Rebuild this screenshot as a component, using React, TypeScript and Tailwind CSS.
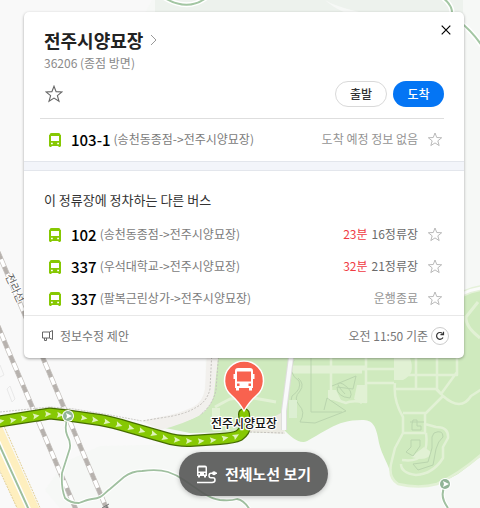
import React from 'react';

type Route = { no: string; path: string; minutes?: string; stops?: string; status?: string };

const routes: Route[] = [
  { no: '102', path: '(송천동종점->전주시양묘장)', minutes: '23', stops: '16정류장' },
  { no: '337', path: '(우석대학교->전주시양묘장)', minutes: '32', stops: '21정류장' },
  { no: '337', path: '(팔복근린상가->전주시양묘장)', status: '운행종료' },
];

function StarIcon({ className }: { className: string }) {
  return (
    <svg viewBox="0 0 18 18" className={className} fill="none" stroke="currentColor" strokeWidth="1.1" aria-hidden="true">
      <path d="M9 1.2 11.1 6.6 17 6.9 12.4 10.6 14 16.3 9 13.1 4 16.3 5.6 10.6 1 6.9 6.9 6.6Z" />
    </svg>
  );
}

function BusIcon({ className }: { className: string }) {
  return (
    <svg viewBox="0 0 12 14" className={className} aria-hidden="true">
      <path
        fill="currentColor"
        fillRule="evenodd"
        d="M2.5 0H9.5Q11.5 0 11.5 2H12V13H11.5V14H9.5V13H2.5V14H.5V13H0V2H.5Q.5 0 2.5 0ZM2 3V8H10V3ZM2 9.8V11.2H3.8V9.8ZM8.2 9.8V11.2H10V9.8Z"
      />
    </svg>
  );
}

function RouteRow({ route }: { route: Route }) {
  return (
    <li className="flex h-8 items-center pl-[25px] pr-[21px]">
      <BusIcon className="mt-0.5 h-3.5 w-3 shrink-0 text-[#86c803]" />
      <strong className="ml-2.5 mt-0.5 text-[15px] font-medium leading-5 text-black">{route.no}</strong>
      <span className="ml-[3px] whitespace-nowrap text-xs text-[#7b7b7b]">{route.path}</span>
      <span className="ml-auto whitespace-nowrap text-xs text-[#6b6b6b]">
        {route.minutes && <span className="mr-1 text-[#f03b44]">{route.minutes}분</span>}
        {route.stops ?? <span className="text-[#949494]">{route.status}</span>}
      </span>
      <button type="button" aria-label={`${route.no} 즐겨찾기`} className="ml-[9px] text-[#b2b2b2]">
        <StarIcon className="h-[15px] w-4" />
      </button>
    </li>
  );
}

const busLine = 'M-4 422 50 413.500 68 415.500 100 420Q112 422 130 427.500L165 437.500Q178 441.500 190 441L220 439Q234 438 239 435.500 245 431 245 426L244 414';
const trail = 'M68 416Q64 427 67 435 72 444 69 451L62 473Q61 488 65 498 70 503 79 503C88 500 83 501 92 499 103 498 103 494 110 489L124 477Q132 471 142 471 158 469 168 472 177 475 184 480L203 493Q212 499 220 500 231 501 237 499 244 500 250 510';

const arrows: [number, number, number][] = [
  [1, 421, -8], [13, 420, -8], [24, 418, -8], [36, 416, -8], [48, 414, 0], [60, 415, 6], [84, 418, 7], [95, 420, 8],
  [107, 422, 12], [119, 425, 15], [131, 428, 15], [142, 431, 15], [154, 434, 16], [165, 438, 15], [177, 440, 5],
  [189, 441, 0], [201, 441, -4], [213, 440, -6], [225, 438, -12], [236, 436, -30],
];

function MapCanvas() {
  return (
    <svg className="absolute inset-0 h-full w-full" aria-hidden="true">
      <rect width="100%" height="100%" fill="#f6f8f6" />
      <path d="M0 0H152L100 100 180 358H205Q208 400 195 407L160 432 190 444 100 446 65 462 45 490 60 508H0Z" fill="#f9f9f9" />
      <path d="M155 0H463V20H400Q340 10 325 0 340 14 370 20H155Z" fill="#edf2ed" />
      <g fill="none" strokeLinecap="round">
        <path d="M163-3Q187 12 206-2M443-2Q454 6 452 18M460 22Q472 31 482 46" stroke="#fff" strokeWidth="5" />
        <path d="M163-3Q187 12 206-2M443-2Q454 6 452 18M460 22Q472 31 482 46" stroke="#a3c6a3" strokeWidth="2" />
      </g>

      <path d="M206 340H480V457Q466 468 458 474 437 487 413 487 397 485 392 478C388 462 382 456 379 443 376 424 372 420 362 420 348 420 339 423 330 428 315 436 306 443 303 442 297 442 290 436 283 429L280 433 245 432 190 433 160 427Q195 421 205 411 214 399 214 358Z" fill="#cfeabe" />
      <path d="M462 345V293L480 288V345Z" fill="#cfeabe" />
      <path d="M462 294Q472 289 482 288" fill="none" stroke="#e5f1da" strokeWidth="6" />
      <path d="M462 294Q472 289 482 288" fill="none" stroke="#fafbfa" strokeWidth="3" />

      <g fill="none" stroke="#e2f1d5" strokeWidth="2.500" strokeLinejoin="round">
        <path d="M478 302 466 317Q465 326 480 338M215 407Q224 402 230 399L248 397 276 402" strokeWidth="3" />
        <path d="M292 368H365M292 371H362" strokeWidth="5" />
        <path d="M331 358V398L346 403Q350 400 366 402V358M366 369H394M366 383H394M394 375H457V358M395 389H436L441 394 457 372M416 358V388M437 358V389L443 396 426 413H403M395 383Q393 400 403 417V433L395 448 392 460Q387 477 398 484 419 489 437 484 459 474 482 454M443 396Q461 412 471 396L482 389M403 433H425V413M425 424 436 427Q449 427 448 438L443 447V458Q433 474 416 475 401 473 401 464M402 460Q430 464 426 433" />
      </g>
      <path d="M394 358H410Q416 374 403 380H394ZM328 390H336L341 400H328ZM357 385H367V399L361 404 354 399ZM424 447 431 452Q430 459 421 459L411 457Z" fill="#e1f1d4" />
      <g fill="none" stroke="#bad5ae" strokeWidth="1">
        <path d="M298 378Q305 384 300 391 293 398 299 405 306 412 300 422L315 423 346 411 327 398 324 410M311 358V412H342M294 360Q287 373 299 381 302 389 292 396 288 408 297 416M332 386 356 376 353 389 337 387Q337 397 350 398 354 391 343 384 332 380 345 394M410 422H424M413 420H417V426H421V430H412V424ZM411 440H420V446L413 456 406 452 411 447ZM434 433Q443 429 443 437 438 441 436 449L433 465 418 470 413 464 428 462 432 448 432 437Z" />
      </g>
      <rect x="212" y="408" width="8" height="9" fill="#e2f1d5" />
      <rect x="289" y="400" width="8" height="18" fill="#dcefd2" />

      <path d="M207 350 205 389Q203 402 193 407 178 414 160 417L142 421 160 430Q184 424 200 415 213 405 214 394L219 350Z" fill="#f2f0ed" />
      <path d="M256 426 281 413 285 434 247 432Z" fill="#ebeae2" />
      <path d="M212 350 210 389Q207 402 195 408 184 415 160 418L142 421M219 350 216 390Q213 405 200 415M250 432 283 433" fill="none" stroke="#c5c2be" strokeDasharray="2 1.500" />
      <path d="M292 350 284 411V430" fill="none" stroke="#dededc" strokeWidth="6" />
      <path d="M292 350 284 411V430" fill="none" stroke="#f9f9fb" strokeWidth="4" />
      <path d="M0 365 4 375 0 377M7 389 10 386 15 399 12 402Z" fill="none" stroke="#e9e9e9" />

      <path d="M-10 400 40 510H18L-10 448Z" fill="#feefbf" />
      <path d="M4 426 41 510M-2 467 18 510" fill="none" stroke="#e3cf91" strokeDasharray="2 1" />
      <path d="M-2 442 29 510" fill="none" stroke="#fff" strokeWidth="5" />
      <path d="M-2 442 29 510" fill="none" stroke="#9dbf9d" strokeWidth="2" />

      <g fill="none">
        <path d="M-2 326 8 350 77 512M-2 252 24 313 43 358 108 512" stroke="#c7c3bf" strokeWidth="5" />
        <path d="M-2 326 8 350 77 512M-2 252 24 313 43 358 108 512" stroke="#fff" strokeWidth="3.500" />
        <path d="M-2 326 8 350 77 512M-2 252 24 313 43 358 108 512" stroke="#b7b2ae" strokeWidth="4" strokeDasharray="8 8" />
        <path d="M0 412 50 407 74 409 110 415 142 421" stroke="#ceccc9" strokeDasharray="2 1" />
      </g>
      <text
        transform="translate(5 276) rotate(65)"
        fontFamily="'Noto Sans CJK KR', sans-serif"
        fontSize="11"
        fill="#666"
        stroke="#fff"
        strokeWidth="2"
        paintOrder="stroke"
      >
        전라선
      </text>
      <path d="M102 508 109 504M103 510 107 507M106 505 109 510" fill="none" stroke="#777" />

      <g fill="none" strokeLinecap="round" strokeLinejoin="round">
        <path d={trail} stroke="#fff" strokeWidth="4" />
        <path d={trail} stroke="#a0c0a0" strokeWidth="1.800" />
        <path d={busLine} stroke="#466d00" strokeWidth="12" />
        <path d={busLine} stroke="#86c803" strokeWidth="9.500" />
      </g>
      {arrows.map(([x, y, angle]) => (
        <path key={x} d="M-3-3 3.500 0-3 3-2 0Z" fill="#dff3b8" transform={`translate(${x} ${y}) rotate(${angle})`} />
      ))}
      <path d="M445 486Q439 496 448 508" fill="none" stroke="#fff" strokeWidth="4" />
      <path d="M445 486Q439 496 448 508" fill="none" stroke="#a0c0a0" strokeWidth="2" />
      {[[68, 416], [445, 484]].map(([x, y]) => (
        <g key={x} transform={`translate(${x} ${y})`}>
          <circle r="6" fill="#fff" />
          <circle r="5" fill="#91b497" />
          <path d="M-2-3 4 0-2 3-1 0Z" fill="#fff" />
        </g>
      ))}

      <g transform="translate(244 380)">
        <path d="M0 31Q-5 22-13 15A19.500 19.500 0 1 1 13 15Q5 22 0 31Z" fill="#f8624f" stroke="#fff" strokeWidth="1.500" />
        <path
          fill="#fff"
          fillRule="evenodd"
          d="M-6-12H6Q9-12 9-9V8H8V10.500H5V8H-5V10.500H-8V8H-9V-9Q-9-12-6-12ZM-7-8.500V1.500H7V-8.500ZM-7 3.500V6H-4.500V3.500ZM4.500 3.500V6H7V3.500Z"
        />
        <path fill="#fff" d="M-10.500-6H-9V-1H-10.500ZM9-6H10.500V-1H9Z" />
      </g>
      <text x="244" y="428" textAnchor="middle" fontFamily="'Noto Sans CJK KR', sans-serif" fontSize="12" fontWeight="500" fill="#111" stroke="#fff" strokeWidth="2.500" strokeLinejoin="round" paintOrder="stroke">
        전주시양묘장
      </text>
    </svg>
  );
}

export default function App() {
  return (
    <main className="relative min-h-screen overflow-hidden pb-32 pl-6 pr-4 pt-3 font-['Noto_Sans_CJK_KR','Noto_Sans',sans-serif]">
      <MapCanvas />
      <article className="relative rounded-[5px] bg-white shadow-[0_1px_3px_rgba(0,0,0,0.35)]">
        <header className="pl-4 pr-5">
          <div className="flex items-start justify-between pl-1 pt-4">
            <div>
              <h1 className="text-lg font-bold leading-6 text-[#222]">
                <a href="#stop" className="flex items-center gap-[7px]">
                  전주시양묘장
                  <svg viewBox="0 0 7 12" className="h-3 w-[7px]" fill="none" stroke="#999" aria-hidden="true">
                    <path d="M1 1 6 6 1 11" />
                  </svg>
                </a>
              </h1>
              <p className="mt-px text-xs leading-5 text-[#8a8a8a]">36206 (종점 방면)</p>
            </div>
            <button type="button" aria-label="닫기" className="-mr-3 -mt-[9px] px-[5px] py-1.5 text-black">
              <svg viewBox="0 0 10 10" className="h-[10px] w-[10px]" fill="none" stroke="currentColor" strokeWidth="1.200" aria-hidden="true">
                <path d="M.7.7 9.300 9.300M9.300.7.7 9.300" />
              </svg>
            </button>
          </div>
          <div className="mt-2 flex items-center border-b border-[#dedede] pb-[11px] pl-1">
            <button type="button" aria-label="정류장 즐겨찾기" className="ml-px text-[#666]">
              <StarIcon className="h-[18px] w-[18px]" />
            </button>
            <div className="ml-auto flex gap-1.5">
              <button type="button" className="h-[26px] w-[52px] rounded-full border border-[#d9d9d9] text-xs font-medium text-[#333]">출발</button>
              <button type="button" className="h-[26px] w-[51px] rounded-full bg-[#0475f4] text-xs font-medium text-white">도착</button>
            </div>
          </div>
        </header>
        <ul className="pb-1.5 pt-1">
          <RouteRow route={{ no: '103-1', path: '(송천동종점->전주시양묘장)', status: '도착 예정 정보 없음' }} />
        </ul>
        <div className="h-2.5 border-y border-[#e3e6ec] bg-[#f3f5fa]" />
        <section className="pb-px">
          <h2 className="px-5 pb-2 pt-[19px] text-[13px] leading-5 text-[#333]">이 정류장에 정차하는 다른 버스</h2>
          <ul>
            {routes.map((route) => (
              <RouteRow key={route.path} route={route} />
            ))}
          </ul>
        </section>
        <footer className="flex h-[43px] items-center border-t border-[#e8e8e8] pb-[3px] pl-[18px] pr-[15px] text-xs text-[#777]">
          <a href="#report" className="flex items-center gap-[7px]">
            <svg viewBox="0 0 11 11" className="h-[11px] w-[11px]" fill="none" stroke="#666" aria-hidden="true">
              <path d="M.5 2H7.500V8H.5ZM7.500 2 10.500.5V9.500L7.500 8M2.500 8V10.500H4.500V8" />
            </svg>
            정보수정 제안
          </a>
          <span className="ml-auto">오전 11:50 기준</span>
          <button type="button" aria-label="새로고침" className="ml-[3px] flex h-[18px] w-[18px] items-center justify-center rounded-full border border-[#ccc] text-[#333]">
            <svg viewBox="0 0 10 10" className="h-[10px] w-[10px]" fill="none" stroke="currentColor" strokeWidth="1.200" aria-hidden="true">
              <path d="M8 6.500A3.400 3.400 0 1 1 7.500 2.600M8.500.8V3.700H5.500" />
            </svg>
          </button>
        </footer>
      </article>
      <button
        type="button"
        className="absolute bottom-3 left-[179px] flex h-11 w-[149px] items-center justify-center gap-2 whitespace-nowrap rounded-full bg-[#555]/90 text-[15px] font-bold text-white shadow-[0_1px_5px_rgba(0,0,0,0.25)]"
      >
        <svg viewBox="0 0 21 19" className="h-[19px] w-[21px]" fill="none" stroke="currentColor" strokeWidth="1.500" aria-hidden="true">
          <path
            d="M3 .5H9Q11 .5 11 2.500V11H10V12.500H8V11H4V12.500H2V11H1V2.500Q1 .5 3 .5ZM2.500 2.500V6.500H9.500V2.500ZM2.500 8V9.500H4V8ZM8 8V9.500H9.500V8Z"
            fill="currentColor"
            fillRule="evenodd"
            stroke="none"
          />
          <path d="M13 10.500Q13 8.200 15 8.200H21M13 10.500Q13 12.800 15 12.800H17Q19 12.800 19 15 19 17.500 16 17.500H1" />
          <circle cx="18" cy="8.200" r="2" fill="currentColor" stroke="none" />
        </svg>
        전체노선 보기
      </button>
    </main>
  );
}
